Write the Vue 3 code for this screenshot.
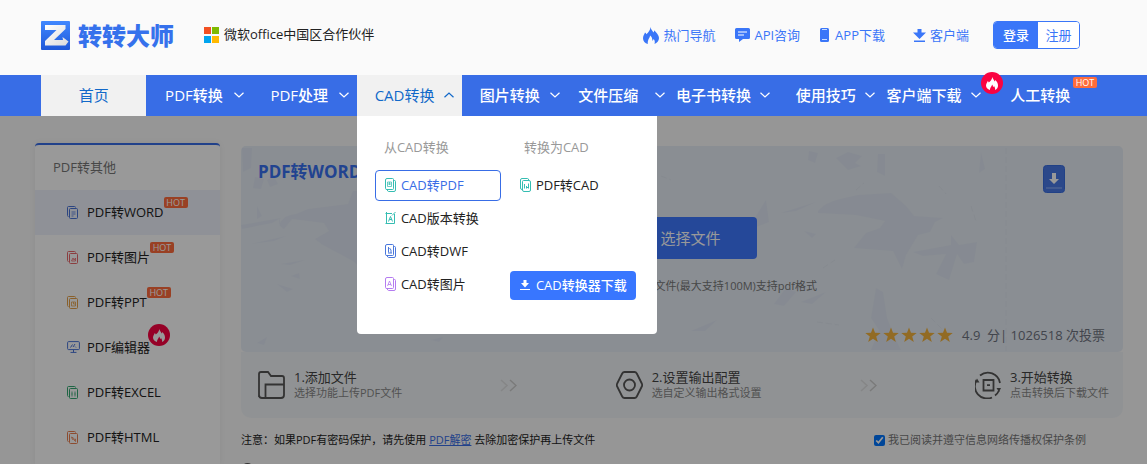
<script setup>
import { ref } from 'vue'

const navItems = [
  { label: '首页', home: true },
  { label: 'PDF转换', arrow: true },
  { label: 'PDF处理', arrow: true },
  { label: 'CAD转换', arrow: true, open: true },
  { label: '图片转换', arrow: true },
  { label: '文件压缩', arrow: true, tight: true },
  { label: '电子书转换', arrow: true, tight: true },
  { label: '使用技巧', arrow: true },
  { label: '客户端下载', arrow: true, tight: true, fire: true },
  { label: '人工转换', hot: true },
]

const fromCad = [
  { label: 'CAD转PDF', kind: 'pdf', color: '#35bdb2', active: true },
  { label: 'CAD版本转换', kind: 'version', color: '#35bdb2' },
  { label: 'CAD转DWF', kind: 'dwf', color: '#4a78dc' },
  { label: 'CAD转图片', kind: 'image', color: '#b47cf0' },
]

const sideItems = [
  { label: 'PDF转WORD', kind: 'word', color: '#4a74d8', hot: true, active: true },
  { label: 'PDF转图片', kind: 'pic', color: '#e8686c', hot: true },
  { label: 'PDF转PPT', kind: 'ppt', color: '#e5a148', hot: true },
  { label: 'PDF编辑器', kind: 'screen', color: '#4a74d8', fire: true },
  { label: 'PDF转EXCEL', kind: 'excel', color: '#35a872' },
  { label: 'PDF转HTML', kind: 'html', color: '#ea7f50' },
]

const glyphs = {
  word: 'M5.5 6h4M5.5 8h4M5.5 10h2',
  pic: 'M5.500 10l1.500-3 1 2 1.500-2v3z',
  ppt: 'M5.500 6h4v4h-4zM7.500 6v2h2',
  excel: 'M6 5.500v5M9 5.500v5M5.500 8h1M8.500 8h1',
  html: 'M5.500 6l2 1-1 1.500zM7.500 8.500l2-.5v2.500z',
}

const agreed = ref(true)
</script>

<template>
  <div class="page">
    <header class="header">
      <a class="brand" href="#">
        <svg class="logo" viewBox="0 0 29 29" aria-hidden="true">
          <defs>
            <linearGradient id="logoBg" x1="0" y1="0" x2="0" y2="1">
              <stop offset="0" stop-color="#4188ff" />
              <stop offset="1" stop-color="#1f58d8" />
            </linearGradient>
            <linearGradient id="logoZ" x1="0" y1="0" x2="1" y2="1">
              <stop offset="0" stop-color="#fff" />
              <stop offset="1" stop-color="#dcdcdc" />
            </linearGradient>
          </defs>
          <rect width="29" height="29" rx="1" fill="url(#logoBg)" />
          <path d="M4 4h20.500v4L13 19h9l-.5-3 6 4.500-3 4H4v-4.500L15.500 9H4z" fill="url(#logoZ)" />
        </svg>
        <span class="brand-name">转转大师</span>
      </a>
      <div class="partner">
        <svg class="ms" viewBox="0 0 15 16" aria-hidden="true">
          <path fill="#f25022" d="M0 0h7v7H0z" />
          <path fill="#7fba00" d="M8 0h7v7H8z" />
          <path fill="#00a4ef" d="M0 9h7v7H0z" />
          <path fill="#ffb900" d="M8 9h7v7H8z" />
        </svg>
        <span>微软office中国区合作伙伴</span>
      </div>
      <div class="tools">
        <a class="tool" href="#">
          <svg width="16" height="17" viewBox="0 0 16 17" aria-hidden="true">
            <path fill="#3a76f8" d="M7.500 0c.4 2.500 2 3.500 3 5.500.5-.5.7-1.500.5-2.300C13.500 5.500 16 8 16 11c0 3-2 5-4.500 6 .6-1.800.4-3.700-1-5-.2 1-.6 1.500-1.200 1.800C9.500 11.500 8.800 9.500 7 8.500 7 11 4.500 12 4.800 17 2 16.200 0 14 0 11.200 0 8.500 1.500 7.500 2 5.500c.8.4 1.200 1 1.400 1.800C5.500 5.500 7.300 3 7.500 0z" />
          </svg>
          热门导航
        </a>
        <a class="tool" href="#">
          <svg width="15" height="14" viewBox="0 0 15 14" aria-hidden="true">
            <path fill="#3a76f8" d="M1.500 0h12q1.500 0 1.500 1.500v8q0 1.500-1.500 1.500H8l-4 3v-3H1.500Q0 11 0 9.500v-8Q0 0 1.500 0z" />
            <path stroke="#fff" stroke-width="1.200" d="M3 4h9M3 7h6" />
          </svg>
          API咨询
        </a>
        <a class="tool phone" href="#">
          <svg width="9" height="14" viewBox="0 0 9 14" aria-hidden="true">
            <rect width="9" height="14" rx="1.500" fill="#3a76f8" />
            <path stroke="#c9dbff" d="M2 1.500h5M2 11.500h5" />
          </svg>
          APP下载
        </a>
        <a class="tool client" href="#">
          <svg width="13" height="13" viewBox="0 0 13 13" aria-hidden="true">
            <path fill="#3a76f8" d="M4.500 0h4v3.500H13L6.500 10 0 3.500h4.500zM1 11.500h11V13H1z" />
          </svg>
          客户端
        </a>
        <div class="auth">
          <button class="login" type="button">登录</button>
          <button class="register" type="button">注册</button>
        </div>
      </div>
    </header>

    <nav class="nav">
      <div
        v-for="item in navItems"
        :key="item.label"
        class="nav-item"
        :class="{ light: item.home || item.open, home: item.home, tight: item.tight, plain: item.hot }"
      >
        <a class="nav-link" href="#">
          <span class="nav-label">{{ item.label }}</span>
          <svg v-if="!item.home" class="chevron" :class="{ up: item.open, none: !item.arrow }" viewBox="0 0 10 6" aria-hidden="true">
            <path d="M.5.700L5 5 9.500.700" />
          </svg>
        </a>
        <span v-if="item.hot" class="hot nav-hot">HOT</span>
        <span v-if="item.fire" class="fire nav-fire">
          <svg viewBox="0 0 12 13" aria-hidden="true">
            <path d="M6.500 0c0 2 2 3 2 4.500.6-.4.800-1 .8-1.500C11 4.500 12 6.500 12 8.500c0 2-1 3.500-3 4.500.5-2-.5-3-1-4-.3.800-.7 1-1 1 0-1-.3-2-1-2.500C6 9.500 4 10 4 13 1.500 12 0 10.500 0 8.500 0 6.500 1.500 5.500 1.700 4c.7.400 1 1 1 1.500C4.500 4.500 6 2 6.500 0z" />
          </svg>
        </span>

        <div v-if="item.open" class="menu">
          <section class="menu-col">
            <h3>从CAD转换</h3>
            <a v-for="m in fromCad" :key="m.label" class="menu-item" :class="{ active: m.active }" href="#">
              <svg class="menu-icon" viewBox="0 0 11 14" :stroke="m.color" aria-hidden="true">
                <template v-if="m.kind === 'version'">
                  <path d="M.5 2.500h6.500M1.500 1v12M.5 12.500h9M9.500 12.500V3M7 4.500L10.500 1M3.500 10.500l2-5 2 5M4.500 8.500H7" />
                </template>
                <template v-else>
                  <path d="M2 .5h5.500q1 0 1 1v9q0 1-1 1H2q-1.500 0-1.500-1V2Q.5.500 2 .5z" />
                  <path d="M8.500 2.500h1q1 0 1 1V12q0 1.500-1.500 1.500H3.500q-1 0-1.200-2" />
                  <path v-if="m.kind === 'pdf'" stroke-opacity=".75" d="M2.500 4h4v4.500h-4zM3 6h3M4.500 4v3" />
                  <path v-if="m.kind === 'dwf'" d="M3.500 3v5.500M3 9h4M4.500 4l1.500 2v3" />
                  <path v-if="m.kind === 'image'" stroke-opacity=".8" d="M2.500 9l2-5 2 5M3 7.500h3" />
                </template>
              </svg>
              {{ m.label }}
            </a>
          </section>
          <section class="menu-col">
            <h3>转换为CAD</h3>
            <a class="menu-item" href="#">
              <svg class="menu-icon" viewBox="0 0 11 14" stroke="#35bdb2" aria-hidden="true">
                <path d="M3.500 2.500H9q1.500 0 1.500 1.500v8q0 1.500-1.500 1.500H4q-1.500 0-1.500-1.500V3.500q0-1 1-1z" />
                <path d="M2 11.500q-1.500 0-1.500-1.500V2Q.5.500 2 .5h5.500q1 0 1.200 1.500M4.500 6v4.500M6.500 8v2.500M8.500 5.500v5M6.500 9.500h2" />
              </svg>
              PDF转CAD
            </a>
            <a class="menu-download" href="#">
              <svg width="10" height="10" viewBox="0 0 10 10" aria-hidden="true">
                <path fill="#fff" d="M3.500 0h3v3H9L5 7.500 1 3h2.500zM0 9h10v1H0z" />
              </svg>
              CAD转换器下载
            </a>
          </section>
        </div>
      </div>
    </nav>

    <div class="content">
      <aside class="sidebar">
        <h2>PDF转其他</h2>
        <a v-for="s in sideItems" :key="s.label" class="side-item" :class="{ active: s.active }" href="#">
          <svg v-if="s.kind === 'screen'" class="side-icon screen" viewBox="0 0 13 12" :stroke="s.color" aria-hidden="true">
            <rect x=".6" y=".6" width="11.800" height="8" rx="1" />
            <path d="M6.500 9v2.500M3.500 11.400h6M3.500 6.500L5.500 3.500M6 6l2-3M8 5.500l1 1" />
          </svg>
          <svg v-else class="side-icon" viewBox="0 0 11 13" :stroke="s.color" aria-hidden="true">
            <rect x="2.500" y="2.500" width="8" height="10" rx="1" />
            <path d="M1.500 10.500q-1 0-1-1v-8q0-1 1-1h6q1 0 1 1" />
            <path :d="glyphs[s.kind]" transform="translate(-1 0)" stroke-opacity=".8" />
          </svg>
          <span class="side-label">{{ s.label }}</span>
          <span v-if="s.hot" class="hot side-hot">HOT</span>
          <span v-if="s.fire" class="fire side-fire">
            <svg viewBox="0 0 12 13" aria-hidden="true">
              <path d="M6.500 0c0 2 2 3 2 4.500.6-.4.800-1 .8-1.500C11 4.500 12 6.500 12 8.500c0 2-1 3.500-3 4.500.5-2-.5-3-1-4-.3.800-.7 1-1 1 0-1-.3-2-1-2.500C6 9.500 4 10 4 13 1.500 12 0 10.500 0 8.500 0 6.500 1.500 5.500 1.700 4c.7.400 1 1 1 1.500C4.500 4.500 6 2 6.500 0z" />
            </svg>
          </span>
        </a>
      </aside>

      <main class="main">
        <section class="upload">
          <svg class="texture" viewBox="0 0 882 206" preserveAspectRatio="none" aria-hidden="true">
            <path d="M39 77q4-8 16-9l12-5 40-5 5-13h12v80l-12-10-30-16-8-6 14-8-5-8-32-4-8 10q-7-4-4-11z" />
            <path d="M1 2h10l-1 20-8 4zM14 31l9 2-3 10-8-1zM26 34l7-4 4 8-8 3zM0 79l40-7-9 5-30 6zM10 98l35-8-12 5zM40 118l24-4-15 5zM36 138l16 5-6 3zM50 130l8-3 1 6zM16 60l5 10-5 3z" />
            <path d="M577 65q8-9 22-12l18-4 33-2 15 13 8 10 29 2-8 4-5 10-12 3-12 20-4 14-9-18-39-3 12-15 14-5 5-7-29-6-38-2z" />
            <path d="M568 5l9 2-3 10-7-3zM595 12l12-6 14 4-7 7 6 3-13 4zM637 8h7v22l-8-4zM515 70l10-16 3 22-13 5zM540 67l35-11-20 9zM563 85l12 3-4 4zM672 106l38-7v-10l8 10 18-3-3 20-10 2-7-10-8 26-13-6 10-20-23 2zM635 142l7 4 4 26 8 20 6 12h-30l8-20-8-12zM545 142l10 4-12 14-10-2zM560 156l25-10-14 12zM740 6l4 17-6 4zM450 185l26-11-12 11z" />
            <path d="M765 2v203M690 172l12 12M698 40l7 8M615 44l8-7M582 122l12-8M480 72l20 5M474 96l18-8M576 176l22 3M420 30l10 4M730 60l5 15" class="scratch" />
            <path d="M16 197l10-6-3 8zM190 194l12-3-4 5zM20 203l9-2z" />
          </svg>
          <h1>PDF转WORD</h1>
          <a class="device" href="#" aria-label="下载">
            <svg viewBox="0 0 22 28" aria-hidden="true">
              <rect x=".5" y=".5" width="21" height="27" rx="3" fill="#4878e6" stroke="#386de0" />
              <path d="M9 8h4v6h3l-5 5-5-5h3z" fill="#fff" />
              <path d="M3 23h16" stroke="#7ca1f4" stroke-width="1.500" />
            </svg>
          </a>
          <button class="choose" type="button">选择文件</button>
          <p class="hint">文件(最大支持100M)支持pdf格式</p>
          <div class="rating">
            <svg v-for="n in 5" :key="n" class="star" viewBox="0 0 16 16" aria-hidden="true">
              <path d="M8 .500l2 5.300 5.700.200-4.500 3.500 1.600 5.500L8 11.800 3.200 15l1.600-5.500L.3 6 6 5.800z" />
            </svg>
            <span class="score">4.9&nbsp; 分| 1026518 次投票</span>
          </div>
        </section>

        <section class="steps">
          <div class="step">
            <svg width="27" height="28" viewBox="0 0 27 28" aria-hidden="true">
              <path d="M1 26V3q0-2 2-2h7l3 4h11q2 0 2 2v17q0 3-3 3H4q-3 0-3-3M7.500 26V13.500H26" />
            </svg>
            <div><h4>1.添加文件</h4><p>选择功能上传PDF文件</p></div>
          </div>
          <svg class="arrows" viewBox="0 0 17 13" aria-hidden="true"><path opacity=".5" d="M1 1l6 5.500L1 12" /><path d="M10 1l6 5.500-6 5.500" /></svg>
          <div class="step">
            <svg width="27" height="28" viewBox="0 0 27 28" aria-hidden="true">
              <path d="M8.500 1h10q1.500 0 2.300 1.500l5 10q.8 1.500 0 3l-5 10Q20 27 18.500 27h-10Q7 27 6.200 25.500l-5-10q-.8-1.500 0-3l5-10Q7 1 8.500 1z" />
              <circle cx="13.500" cy="14" r="5.500" />
            </svg>
            <div><h4>2.设置输出配置</h4><p>选自定义输出格式设置</p></div>
          </div>
          <svg class="arrows" viewBox="0 0 17 13" aria-hidden="true"><path opacity=".5" d="M1 1l6 5.500L1 12" /><path d="M10 1l6 5.500-6 5.500" /></svg>
          <div class="step">
            <svg width="26" height="28" viewBox="0 0 26 28" aria-hidden="true">
              <path d="M5 4.500A12.300 12.300 0 0 1 25 12M24 19.500A12.300 12.300 0 0 1 20 24.500M17 26.500A12.300 12.300 0 0 1 1.500 9M8.500 9h10v10.500h-10zM12 14.200h3" />
              <path d="M0 11.500L2 7.500l2.500 4zM21.500 17l2.500 4 2-4z" class="tip" />
            </svg>
            <div><h4>3.开始转换</h4><p>点击转换后下载文件</p></div>
          </div>
        </section>

        <div class="notes">
          <p>注意：如果PDF有密码保护，请先使用 <a href="#">PDF解密</a> 去除加密保护再上传文件</p>
          <label class="agree">
            <input v-model="agreed" type="checkbox" />
            我已阅读并遵守信息网络传播权保护条例
          </label>
        </div>
        <div class="more">
          <svg width="13" height="13" viewBox="0 0 13 13" aria-hidden="true"><circle cx="6.500" cy="6.500" r="5.800" /></svg>
        </div>
      </main>
      <div class="mask"></div>
    </div>
  </div>
</template>

<style>
body {
  background: #fafafa;
}
</style>

<style scoped>
* {
  box-sizing: border-box;
}
.page {
  display: flex;
  flex-direction: column;
  height: 100vh;
  overflow: hidden;
  background: #fafafa;
  color: #222;
  font: 13px/18px "Open Sans", "Noto Sans CJK SC", sans-serif;
}
h1, h2, h3, h4, p {
  margin: 0;
  font-weight: 400;
}
a {
  color: inherit;
  text-decoration: none;
}
button {
  border: 0;
  padding: 0;
  font: inherit;
}
svg {
  display: block;
  flex: none;
}

/* Header */
.header {
  display: flex;
  align-items: center;
  flex: none;
  height: 75px;
  padding: 0 67px 5px 41px;
}
.brand {
  display: flex;
  align-items: center;
  gap: 8px;
}
.logo {
  width: 29px;
  height: 29px;
}
.brand-name {
  color: #3571ec;
  font: 900 24px/28px "Noto Sans CJK SC", sans-serif;
}
.partner {
  display: flex;
  align-items: center;
  gap: 5px;
  margin-left: 30px;
}
.partner span {
  padding-bottom: 2px;
}
.ms {
  width: 15px;
  height: 16px;
}
.tools {
  display: flex;
  align-items: center;
  gap: 20px;
  margin-left: auto;
  color: #3a76f8;
}
.tool {
  display: flex;
  align-items: center;
  gap: 4px;
}
.phone {
  gap: 6px;
}
.client {
  margin-left: 8px;
}
.auth {
  display: flex;
  height: 28px;
  margin-left: 4px;
  overflow: hidden;
  border: 1px solid #3a76f8;
  border-radius: 4px;
  background: #fff;
}
.login {
  width: 44px;
  background: #3a76f8;
  color: #fff;
  font-weight: 500;
}
.register {
  width: 41px;
  background: #fff;
  color: #3a76f8;
}

/* Navigation */
.nav {
  position: relative;
  z-index: 2;
  display: grid;
  grid-template-columns: repeat(10, 1fr);
  flex: none;
  height: 41px;
  padding: 0 53px 0 41px;
  background: #386de6;
  color: #fff;
  font-size: 15px;
  line-height: 20px;
}
.nav-item {
  position: relative;
}
.nav-link {
  display: flex;
  align-items: center;
  height: 100%;
  padding: 0 8px 2px;
}
.tight .nav-link {
  padding-left: 0;
}
.plain .nav-link {
  padding-left: 16px;
}
.home .nav-link {
  padding-left: 0;
  padding-right: 0;
}
.nav-label {
  flex: 1;
  text-align: center;
  white-space: nowrap;
  font-weight: 500;
}
.tight .nav-label {
  padding-right: 6px;
}
.light {
  background: #f1f1f1;
  color: #1269c9;
}
.light .nav-label {
  font-weight: 400;
}
.chevron {
  width: 10px;
  height: 6px;
  fill: none;
  stroke: currentColor;
  stroke-width: 1.200;
}
.chevron.up {
  transform: rotate(180deg);
}
.chevron.none {
  visibility: hidden;
}
.hot {
  width: 24px;
  height: 11px;
  border-radius: 2px;
  background: #ff6c3c;
  color: #fff;
  font-size: 9px;
  line-height: 11px;
  text-align: center;
}
.fire {
  display: flex;
  align-items: center;
  justify-content: center;
  width: 22px;
  height: 22px;
  border-radius: 50%;
  background: #fa0341;
}
.fire svg {
  width: 12px;
  height: 13px;
  fill: #fff;
}
.nav-hot {
  position: absolute;
  top: 2px;
  right: -3px;
}
.nav-fire {
  position: absolute;
  top: -3px;
  right: -14px;
  z-index: 1;
}

/* Drop-down menu */
.menu {
  position: absolute;
  top: 100%;
  left: 0;
  display: grid;
  grid-template-columns: 126px 126px;
  column-gap: 9px;
  width: 300px;
  padding: 22px 18px 34px;
  border-radius: 0 0 4px 4px;
  background: #fff;
  color: #222;
  font-size: 13px;
  line-height: 18px;
}
.menu-col {
  display: flex;
  flex-direction: column;
  gap: 2px;
}
.menu-col h3 {
  margin-bottom: 12px;
  padding-left: 9px;
  color: #999;
  font-size: 13px;
}
.menu-col + .menu-col h3 {
  padding-left: 14px;
}
.menu-item {
  display: flex;
  align-items: center;
  gap: 5px;
  height: 31px;
  padding: 0 0 1px 9px;
  border: 1px solid transparent;
  border-radius: 4px;
}
.menu-item.active {
  border-color: #386de6;
  color: #386de6;
}
.menu-icon {
  width: 11px;
  height: 14px;
  fill: none;
}
.menu-download {
  display: flex;
  align-items: center;
  gap: 6px;
  height: 29px;
  margin-top: auto;
  padding: 0 0 1px 10px;
  border-radius: 4px;
  background: #3876ff;
  color: #fff;
  font-weight: 500;
}

/* Page body */
.content {
  position: relative;
  display: flex;
  flex: 1;
  min-height: 0;
  gap: 21px;
  padding: 27px 24px 0 35px;
  overflow: hidden;
}
.mask {
  position: absolute;
  inset: 0;
  z-index: 1;
  background: rgba(0, 0, 0, 0.4);
}
.sidebar {
  flex: none;
  width: 185px;
  border-top: 2px solid #386de6;
  border-radius: 4px 4px 0 0;
  background: #fff;
  box-shadow: 0 0 6px rgba(0, 0, 0, 0.06);
}
.sidebar h2 {
  height: 45px;
  padding-left: 18px;
  color: #777;
  font-size: 13px;
  line-height: 45px;
}
.side-item {
  display: flex;
  align-items: center;
  height: 45px;
  padding: 0 0 1px 32px;
}
.side-item.active {
  background: #eff2fc;
}
.side-icon {
  width: 11px;
  height: 13px;
  margin-right: 9px;
  fill: none;
}
.side-icon.screen {
  width: 13px;
  height: 12px;
  margin-right: 7px;
}
.side-hot {
  align-self: flex-start;
  margin-top: 7px;
}
.side-fire {
  align-self: flex-start;
  margin: -1px 0 0 -2px;
}
.main {
  flex: 1;
  min-width: 0;
  padding-top: 3px;
}
.upload {
  position: relative;
  display: grid;
  grid-template-columns: 1fr auto;
  padding: 16px 18px 8px 17px;
  border-radius: 5px;
  background: #e6edf5;
}
.texture {
  position: absolute;
  inset: 0;
  width: 100%;
  height: 100%;
  fill: #e0e7f3;
}
.scratch {
  fill: none;
  stroke: #e0e7f0;
  stroke-dasharray: 6 3;
}
.upload h1,
.device,
.choose,
.hint,
.rating {
  position: relative;
}
.upload h1 {
  color: #3871f0;
  font-size: 17px;
  font-weight: 700;
  line-height: 20px;
}
.device {
  margin: 3px 40px 0 0;
}
.device svg {
  width: 22px;
  height: 28px;
}
.choose {
  grid-column: 1 / -1;
  justify-self: center;
  width: 150px;
  height: 42px;
  margin-top: 24px;
  padding-left: 18px;
  border-radius: 4px;
  background: #3e78ff;
  color: #fff;
  font-size: 15px;
}
.hint {
  grid-column: 1 / -1;
  justify-self: end;
  margin: 18px 34% 0 0;
  color: #777;
  font-size: 11px;
}
.rating {
  grid-column: 1 / -1;
  display: flex;
  align-items: center;
  justify-content: flex-end;
  gap: 2px;
  margin-top: 31px;
  color: #6e7380;
}
.star {
  width: 16px;
  height: 16px;
  fill: #f3b23c;
}
.score {
  margin-left: 7px;
}
.steps {
  display: flex;
  align-items: center;
  justify-content: space-between;
  height: 66px;
  padding: 0 14px 0 17px;
  border-radius: 0 0 10px 10px;
  background: #f1f4f7;
}
.step {
  display: flex;
  align-items: center;
  gap: 9px;
}
.step svg {
  fill: none;
  stroke: #555;
  stroke-width: 1.800;
}
.step .tip {
  fill: #555;
  stroke: none;
}
.step h4 {
  color: #444;
  font-size: 13px;
  line-height: 16px;
}
.step p {
  color: #888;
  font-size: 11px;
  line-height: 16px;
}
.arrows {
  width: 17px;
  height: 13px;
  fill: none;
  stroke: #ccc;
  stroke-width: 1.500;
}
.notes {
  display: flex;
  align-items: center;
  justify-content: space-between;
  padding: 13px 37px 14px 0;
  font-size: 11px;
}
.notes a {
  color: #386de6;
  text-decoration: underline;
}
.agree {
  display: flex;
  align-items: center;
  gap: 3px;
  color: #777;
}
.agree input {
  width: 11px;
  height: 11px;
  margin: 0;
}
.more svg {
  fill: none;
  stroke: #555;
  stroke-width: 1.400;
}
</style>
